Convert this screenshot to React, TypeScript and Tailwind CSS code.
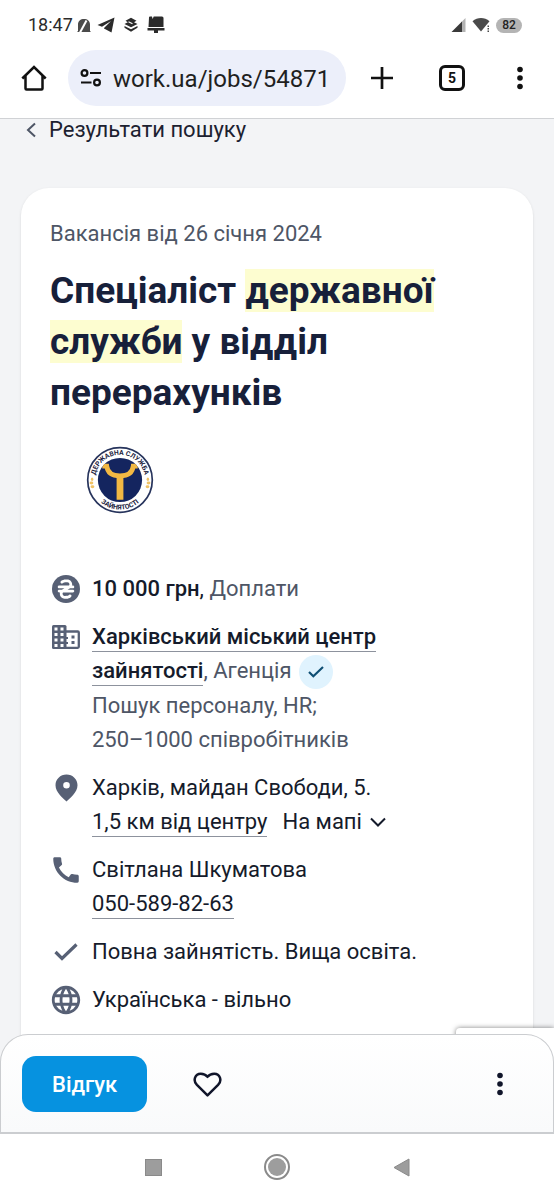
import type { ReactNode } from "react";
import { FaHryvniaSign } from "react-icons/fa6";
import { MdCall, MdLanguage } from "react-icons/md";

function StatusBar() {
  return (
    <div className="flex h-[50px] items-center justify-between pl-7 pr-8 text-[#2b2b2b]">
      <div className="flex items-center">
        <span className="text-[18px] leading-6">18:47</span>
        <svg className="ml-1 h-4 w-[14px]" viewBox="0 0 14 16" fill="currentColor">
          <path d="M1 14V7.500C1 4 3.500 2 7 2s6 2 6 5.500V14l1 1H0z" opacity="0.85" />
          <path d="M3 15.500L9.500 3.500" stroke="white" strokeWidth="2" />
        </svg>
        <svg className="ml-1.5 h-4 w-[18px]" viewBox="0 0 18 16" fill="currentColor">
          <path d="M17.500 0.500L0.500 8l4.500 1.800L14 4 7 11v.5l7.500 4z" />
        </svg>
        <svg className="ml-2 h-4 w-4" viewBox="0 0 16 16" fill="currentColor">
          <path d="M8 .8l5.500 2.900L11 5.200l3.500 1.700L8 10.200 1.500 7 4.800 5.200 2.500 3.700z" />
          <path d="M1.500 9l6.500 3.300L14.500 9v1.700L8 14.800l-6.500-4.100z" />
          <path d="M5.500 4.800l4 2" stroke="white" strokeWidth="1.200" />
        </svg>
        <svg className="ml-2 h-[18px] w-[18px]" viewBox="0 0 18 18" fill="currentColor">
          <path d="M2 1.500Q2 .5 3 .5h2l.6 2.500L6.700.5H15q1.500 0 1.500 1.500v9h-15z" />
          <path d="M.5 12h17v2.500H11V17H7v-2.500H.5z" />
        </svg>
      </div>
      <div className="flex items-center">
        <svg className="h-[15px] w-[15px]" viewBox="0 0 15 15">
          <path d="M14.500 0v14H10V4.500z" fill="#b3b3b3" />
          <path d="M11 3.500V14H.5z" fill="#3a3a3a" />
        </svg>
        <svg className="ml-1.5 h-4 w-[18px]" viewBox="0 0 18 16">
          <path d="M.5 4.300C5.500 0 12.500 0 17.500 4.300L9 14.500z" fill="#4a4a4a" />
          <path d="M14.500 8H18v8h-3.500z" fill="white" />
          <path d="M15.500 8.500H17V10h-1.500zM15.500 11H17v1.500h-1.500zM15.500 13.500H17V15h-1.500z" fill="#4a4a4a" />
        </svg>
        <span className="ml-1.5 flex h-[15px] w-[26px] items-center justify-center rounded-full bg-[#b4b4b4] text-[12px] leading-none font-medium text-[#222]">
          82
        </span>
      </div>
    </div>
  );
}

function Dots({ className }: { className: string }) {
  return (
    <svg className={className} viewBox="0 0 8 24" fill="currentColor">
      <circle cx="4" cy="3.500" r="2.800" />
      <circle cx="4" cy="12" r="2.800" />
      <circle cx="4" cy="20.500" r="2.800" />
    </svg>
  );
}

function BrowserBar() {
  return (
    <div className="flex items-center pb-3 text-[#111]">
      <button aria-label="Головна" className="flex h-14 w-[68px] shrink-0 items-center justify-center">
        <svg className="size-7" viewBox="0 0 28 28" fill="none" stroke="currentColor" strokeWidth="2.500">
          <path d="M2.300 14.500L14 3l11.700 11.500M5.500 12v12.500q0 1 1 1h15q1 0 1-1V12" />
        </svg>
      </button>
      <div className="mr-1 flex h-14 min-w-0 flex-1 items-center rounded-full bg-[#eceffa] pl-3">
        <svg className="h-[18px] w-[22px] shrink-0" viewBox="0 0 22 18" fill="none" stroke="currentColor" strokeWidth="2.200">
          <circle cx="4.500" cy="4" r="2.900" />
          <path d="M10 4h11M1 13.500h10.500" />
          <circle cx="17" cy="13.500" r="2.900" />
        </svg>
        <input
          aria-label="Адреса сторінки"
          defaultValue="work.ua/jobs/54871"
          className="ml-[11px] w-full min-w-0 bg-transparent pt-0.5 text-[24px] leading-8 text-[#1f1f1f] outline-none"
        />
      </div>
      <button aria-label="Нова вкладка" className="flex h-14 w-16 shrink-0 items-center justify-center">
        <svg className="size-6" viewBox="0 0 24 24" stroke="currentColor" strokeWidth="2.700">
          <path d="M1 12h22M12 1v22" />
        </svg>
      </button>
      <button aria-label="Вкладки" className="ml-1 flex h-14 w-[68px] shrink-0 items-center justify-center">
        <span className="flex size-[26px] items-center justify-center rounded-md border-[3px] border-[#111] text-[14px] leading-none font-bold">
          5
        </span>
      </button>
      <button aria-label="Меню браузера" className="flex h-14 w-[68px] shrink-0 items-center justify-center">
        <Dots className="h-6 w-2" />
      </button>
    </div>
  );
}

function EmployerLogo() {
  return (
    <svg className="size-[68px]" viewBox="0 0 100 100" role="img" aria-label="Державна служба зайнятості">
      <defs>
        <path id="logo-top" d="M13 50a37 37 0 0 1 74 0" />
        <path id="logo-bottom" d="M6.500 50a43.500 43.500 0 0 0 87 0" />
        <clipPath id="logo-disc">
          <circle cx="50" cy="50" r="32.500" />
        </clipPath>
      </defs>
      <circle cx="50" cy="50" r="47.500" fill="white" stroke="#27345c" strokeWidth="2.500" />
      <circle cx="50" cy="50" r="32.500" fill="#14255f" />
      <g fill="none" stroke="#f2b843" clipPath="url(#logo-disc)">
        <path d="M24 29.500h6.500c1 9.500 8 14.500 19.500 14.500s18.500-5 19.500-14.500H76" strokeWidth="7" />
        <path d="M50 42v37" strokeWidth="10" />
      </g>
      <g fill="#f0c266">
        <ellipse cx="9" cy="49" rx="1.800" ry="2.600" />
        <ellipse cx="8" cy="54.500" rx="2.800" ry="2.200" />
        <ellipse cx="9.500" cy="60" rx="2.800" ry="2.200" />
        <ellipse cx="91" cy="49" rx="1.800" ry="2.600" />
        <ellipse cx="92" cy="54.500" rx="2.800" ry="2.200" />
        <ellipse cx="90.500" cy="60" rx="2.800" ry="2.200" />
      </g>
      <g fill="#1d2340" fontWeight="700" textAnchor="middle">
        <text fontSize="10">
          <textPath href="#logo-top" startOffset="50%">ДЕРЖАВНА СЛУЖБА</textPath>
        </text>
        <text fontSize="10">
          <textPath href="#logo-bottom" startOffset="50%">ЗАЙНЯТОСТІ</textPath>
        </text>
      </g>
    </svg>
  );
}

function BuildingIcon() {
  return (
    <svg className="h-6 w-7" viewBox="0 0 28 24">
      <rect x="0" y="0" width="14.500" height="24" rx="1.500" fill="currentColor" />
      <rect x="12" y="6.500" width="14.800" height="16.300" rx="1" fill="none" stroke="currentColor" strokeWidth="2.300" />
      <path
        d="M2.500 2.500h3v3h-3zM8.500 2.500h3v3h-3zM2.500 8h3v3h-3zM8.500 8h3v3h-3zM2.500 13.500h3v3h-3zM8.500 13.500h3v3h-3zM2.500 19h3v3h-3zM8.500 19h3v3h-3z"
        fill="white"
      />
      <path d="M19.500 10.500h3v3h-3zM19.500 16h3v3h-3zM14 12h2v2h-2zM14 17h2v2h-2z" fill="currentColor" />
    </svg>
  );
}

function PinIcon() {
  return (
    <svg className="h-7 w-[23px]" viewBox="0 0 23 28" fill="currentColor" fillRule="evenodd">
      <path d="M11.500.5C5.300.5.500 5.300.500 11.300.500 18.500 8.500 24.500 11.500 27.500c3-3 11-9 11-16.200C22.500 5.300 17.700.5 11.500.5zM11.500 8a3.300 3.300 0 1 1 0 6.600 3.300 3.300 0 0 1 0-6.600z" />
    </svg>
  );
}

function CheckIcon({ className }: { className: string }) {
  return (
    <svg className={className} viewBox="0 0 24 18" fill="none" stroke="currentColor" strokeWidth="3.200">
      <path d="M1.500 9l6.500 6.500L22.500 1.500" />
    </svg>
  );
}

function InfoRow({ icon, children }: { icon: ReactNode; children: ReactNode }) {
  return (
    <li className="flex gap-3">
      <span className="flex h-[34px] w-7 shrink-0 items-center justify-center text-[#576075]">{icon}</span>
      <div className="min-w-0 flex-1">{children}</div>
    </li>
  );
}

function VacancyCard() {
  return (
    <article className="mx-[21px] mt-12 flex-1 rounded-t-[28px] bg-white px-[29px] pt-[29px] pb-12 shadow-sm">
      <p className="text-[22px] leading-[34px] text-[#4e5666]">Вакансія від 26 січня 2024</p>
      <h1 className="mt-3.5 text-[37px] leading-[51px] font-bold text-[#17203a]">
        Спеціаліст <mark className="bg-[#fdfdd0] text-inherit">державної</mark>{" "}
        <mark className="bg-[#fdfdd0] text-inherit">служби</mark> у відділ перерахунків
      </h1>
      <div className="mt-7 ml-9">
        <EmployerLogo />
      </div>
      <ul className="mt-[58px] flex flex-col gap-3.5 pr-3 pl-0.5 text-[22px] leading-[34px] text-[#151b2b]">
        <InfoRow
          icon={
            <span className="flex size-7 items-center justify-center rounded-full bg-[#576075] text-white">
              <FaHryvniaSign className="size-[22px]" />
            </span>
          }
        >
          <span className="font-medium">10 000 грн</span>,<span className="text-[#4e5666]"> Доплати</span>
        </InfoRow>
        <InfoRow icon={<BuildingIcon />}>
          <a href="#company" className="border-b border-[#8d929d] pb-0.5 font-medium">
            Харківський міський центр зайнятості
          </a>
          <span className="text-[#4e5666]">, Агенція</span>
          <span className="ml-2 inline-flex size-[34px] items-center justify-center rounded-full bg-[#e0f3fe] align-middle text-[#0e4f74]">
            <CheckIcon className="h-3 w-4" />
          </span>
          <p className="text-[#4e5666]">
            Пошук персоналу, HR;
            <br />
            250–1000 співробітників
          </p>
        </InfoRow>
        <InfoRow icon={<PinIcon />}>
          <p>Харків, майдан Свободи, 5.</p>
          <a href="#center" className="border-b border-[#8d929d] pb-0.5">
            1,5 км від центру
          </a>
          <button className="ml-[15px] inline-flex items-center gap-2">
            На мапі
            <svg className="h-[10px] w-4" viewBox="0 0 16 10" fill="none" stroke="currentColor" strokeWidth="2">
              <path d="M1 1.500l7 7 7-7" />
            </svg>
          </button>
        </InfoRow>
        <InfoRow icon={<MdCall className="size-[34px] shrink-0" />}>
          <p>Світлана Шкуматова</p>
          <a href="tel:0505898263" className="border-b border-[#8d929d] pb-0.5">
            050-589-82-63
          </a>
        </InfoRow>
        <InfoRow icon={<CheckIcon className="h-[18px] w-6" />}>Повна зайнятість. Вища освіта.</InfoRow>
        <InfoRow icon={<MdLanguage className="size-[34px] shrink-0" />}>Українська - вільно</InfoRow>
      </ul>
    </article>
  );
}

function ActionBar() {
  return (
    <div className="relative flex items-center rounded-t-[28px] border border-b-2 border-[#cbcdd0] bg-linear-to-b from-white to-[#f9fafb] px-[21px] pt-[21px] pb-5">
      <button className="h-14 rounded-[14px] bg-[#0692e0] px-[30px] text-[22px] font-medium text-white">Відгук</button>
      <button aria-label="Зберегти" className="ml-8 flex size-14 items-center justify-center text-[#10152a]">
        <svg className="h-[25px] w-[29px]" viewBox="0 0 30 26" fill="none" stroke="currentColor" strokeWidth="2.600" strokeLinejoin="round">
          <path d="M15 24.300L4 13.500C-.5 8.800 2 1.800 8 1.800c3 0 5.500 1.300 7 3.200 1.500-1.900 4-3.200 7-3.200 6 0 8.500 7 4 11.700z" />
        </svg>
      </button>
      <button aria-label="Більше" className="ml-auto flex h-14 w-16 items-center justify-center text-[#10152a]">
        <Dots className="h-6 w-2" />
      </button>
    </div>
  );
}

function SystemNav() {
  return (
    <nav className="flex items-center justify-center bg-white py-[18px] text-[#9d9d9d]">
      <button aria-label="Останні" className="flex h-[30px] w-[124px] items-center justify-center">
        <span className="size-[17px] border border-[#8a8a8a] bg-[#9d9d9d]" />
      </button>
      <button aria-label="Додому" className="flex h-[30px] w-[124px] items-center justify-center">
        <span className="flex size-[26px] items-center justify-center rounded-full border-2 border-[#8a8a8a]">
          <span className="size-[18px] rounded-full bg-[#9d9d9d]" />
        </span>
      </button>
      <button aria-label="Назад" className="flex h-[30px] w-[124px] items-center justify-center">
        <svg className="h-[19px] w-[17px]" viewBox="0 0 17 19" fill="currentColor" stroke="#8a8a8a">
          <path d="M16 1v17L1 9.500z" />
        </svg>
      </button>
    </nav>
  );
}

export default function App() {
  return (
    <div className="flex min-h-screen flex-col bg-[#f3f4f6] font-[Roboto,'Open_Sans',sans-serif]">
      <header className="border-b border-[#d0d2d5] bg-white">
        <StatusBar />
        <BrowserBar />
      </header>
      <main className="flex flex-1 flex-col">
        <a href="#results" className="flex items-center self-start pl-[26px] text-[22px] leading-[21px] text-[#1c2130]">
          <svg className="mr-[13px] h-4 w-[10px]" viewBox="0 0 10 16" fill="none" stroke="#4e5666" strokeWidth="2">
            <path d="M9 1.500L2 8l7 6.500" />
          </svg>
          Результати пошуку
        </a>
        <VacancyCard />
      </main>
      <footer className="sticky bottom-0 -mt-8">
        <div className="absolute -top-1.5 right-0 h-10 w-[98px] rounded-tl-sm bg-white shadow-[0_0_5px_rgba(0,0,0,0.5)]" />
        <ActionBar />
        <SystemNav />
      </footer>
    </div>
  );
}
